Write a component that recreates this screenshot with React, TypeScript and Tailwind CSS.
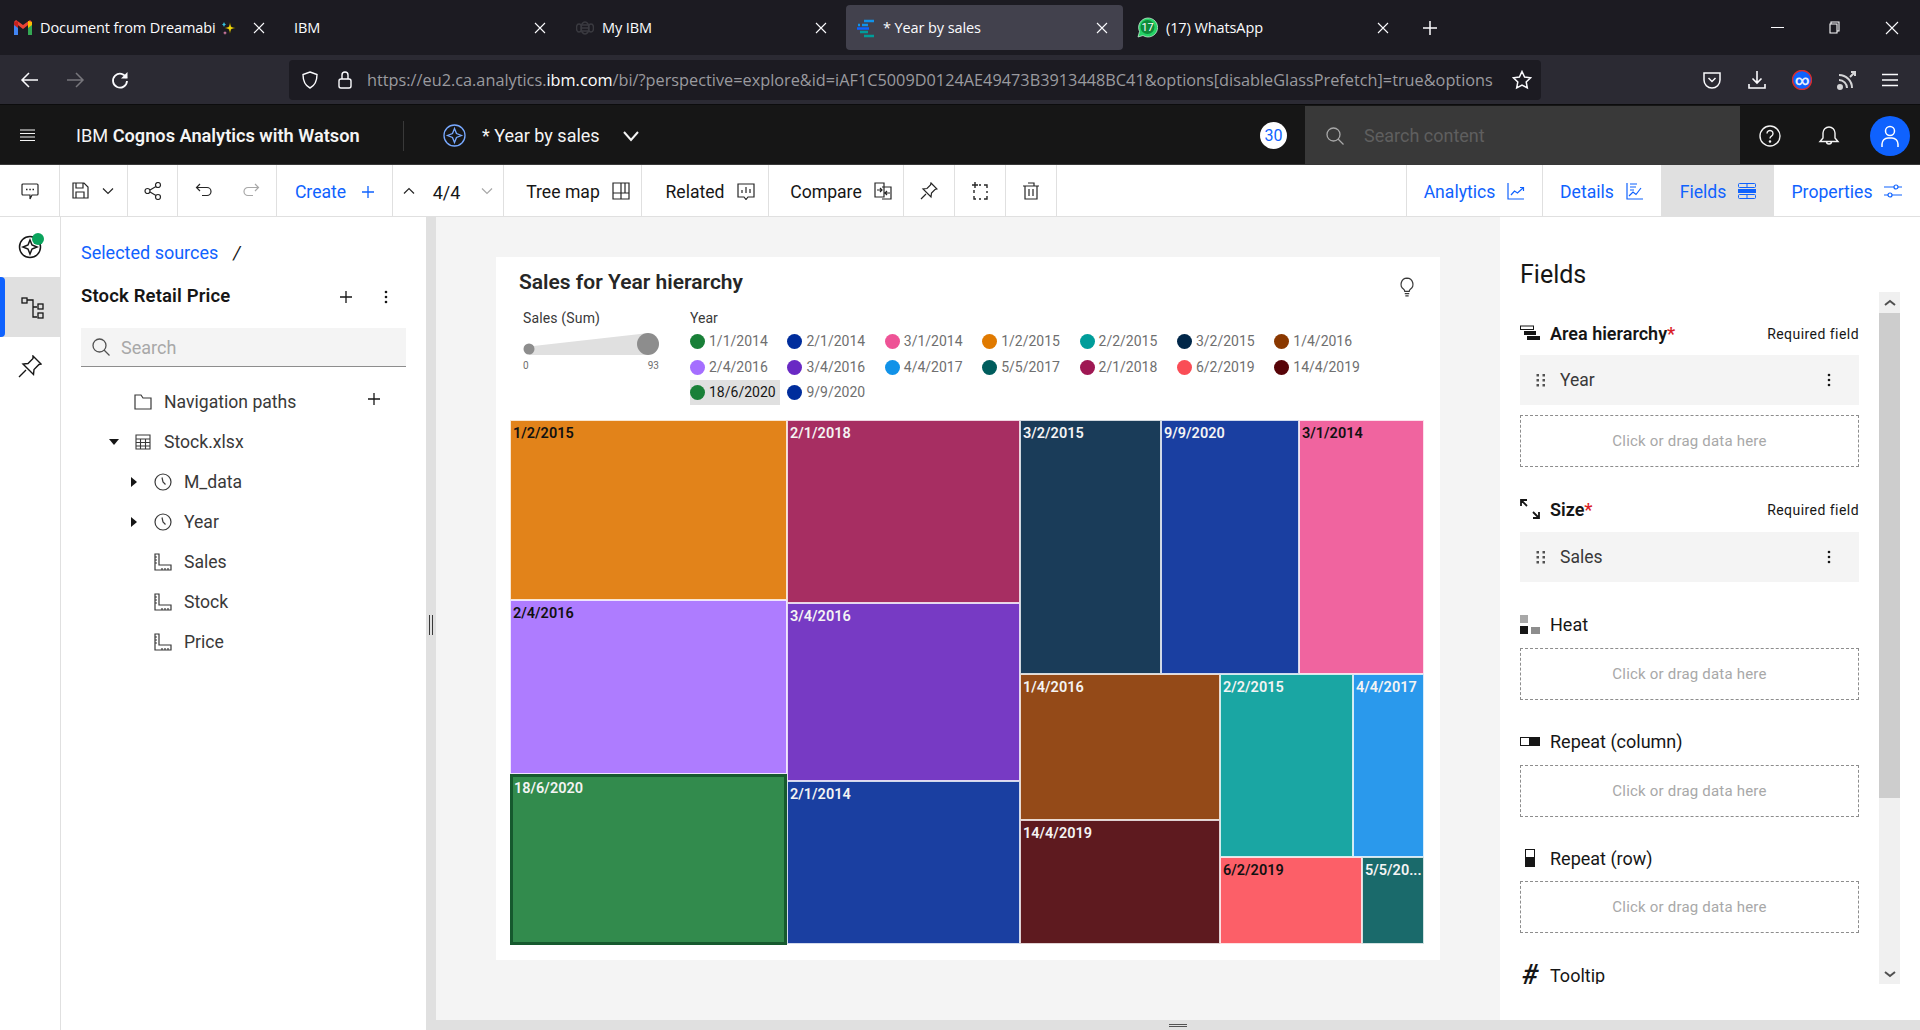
import type { ReactNode } from "react";

const sans = "font-['Roboto',sans-serif]";

function Ico({ s = 20, c = "currentColor", w = 1.4, children, vb = 20 }: { s?: number; c?: string; w?: number; children: ReactNode; vb?: number }) {
  return (
    <svg width={s} height={s} viewBox={`0 0 ${vb} ${vb}`} fill="none" stroke={c} strokeWidth={w} className="shrink-0">
      {children}
    </svg>
  );
}

const Close = ({ c = "#fbfbfe" }: { c?: string }) => (
  <Ico s={12} vb={12} c={c} w={1.1}><path d="M1 1l10 10M11 1L1 11" /></Ico>
);

function Tab({ w, icon, label, active }: { w: string; icon?: ReactNode; label: ReactNode; active?: boolean }) {
  return (
    <div className={`${w} h-[45px] flex items-center pl-[14px] pr-[15px] gap-2 text-[14.5px] text-[#fbfbfe] rounded ${active ? "bg-[#42414d]" : ""}`}>
      {icon}
      <div className="flex-1 min-w-0 whitespace-nowrap overflow-hidden">{label}</div>
      <Close />
    </div>
  );
}

const Gmail = () => (
  <svg width="18" height="15" viewBox="0 0 18 15" className="shrink-0">
    <path d="M0 2v13h4V6z" fill="#4285f4" />
    <path d="M14 6v9h4V2z" fill="#34a853" />
    <path d="M0 2l9 7 9-7-2-2-7 5-7-5-2 2z" fill="#ea4335" />
    <path d="M14 1l4 1v3l-4 3z" fill="#fbbc04" />
    <path d="M0 2l4-1v7L0 5z" fill="#c5221f" />
  </svg>
);

const Sparkle = () => (
  <svg width="16" height="16" viewBox="0 0 16 16" className="inline-block align-[-3px] ml-[5px]">
    <path d="M9 2l1.3 4.7L15 8l-4.700 1.300L9 14l-1.300-4.700L3 8l4.700-1.300z" fill="#f5d90a" stroke="#111" strokeWidth="0.6" />
    <path d="M3 2l.8 1.800L5 4.500l-1.200.7L3 7l-.8-1.800L1 4.500l1.200-.7z" fill="#34c3e0" />
    <path d="M4 11l.5 1.200L6 13l-1.500.6L4 15l-.5-1.400L2 13l1.500-.8z" fill="#f08bb8" />
  </svg>
);

const Bee = () => (
  <svg width="18" height="14" viewBox="0 0 18 14" className="shrink-0 ml-[1px]" fill="none" stroke="#3a3a40" strokeWidth="1.500">
    <ellipse cx="9" cy="7" rx="4" ry="6" />
    <path d="M5 4h8M5 7h8M5 10h8" />
    <ellipse cx="3" cy="7" rx="2.500" ry="4" />
    <ellipse cx="15" cy="7" rx="2.500" ry="4" />
  </svg>
);

const CognosTab = () => (
  <svg width="20" height="20" viewBox="0 0 20 20" className="shrink-0" fill="none" strokeWidth="2.500">
    <path d="M8 3h10" stroke="#1192e8" />
    <path d="M2 7h2M6 7h6" stroke="#1192e8" />
    <path d="M1 10.500h12" stroke="#0f62fe" />
    <path d="M4 14h8" stroke="#009d9a" />
    <path d="M8 18h10" stroke="#009d9a" />
  </svg>
);

const WhatsApp = () => (
  <svg width="21" height="21" viewBox="0 0 21 21" className="shrink-0">
    <path d="M1 20l1.500-5.500A9.500 9.500 0 1 1 6 18.500z" fill="#25d366" stroke="#d7f5e0" strokeWidth="0.700" />
    <circle cx="10.500" cy="10" r="7" fill="#0f8a3a" />
    <text x="10.500" y="14" textAnchor="middle" fontSize="11" fill="#fff" fontFamily="Roboto">17</text>
  </svg>
);

function ToolCell({ w, children, bg }: { w: string; children: ReactNode; bg?: string }) {
  return (
    <div className={`${w} h-full shrink-0 flex items-center justify-center gap-[12px] border-r border-[#e0e0e0] ${bg ?? ""}`}>
      {children}
    </div>
  );
}

const ToolText = ({ blue, children }: { blue?: boolean; children: ReactNode }) => (
  <span className={`pt-[3px] ${blue ? "text-[#0f62fe]" : ""}`}>{children}</span>
);

function Leaf({ c, h, w, label, dark, sel }: { c: string; h?: string; w?: string; label: string; dark?: boolean; sel?: boolean }) {
  return (
    <div
      className={`${h ?? ""} ${w ?? ""} ${c} ${sel ? "border-[3px] border-[#16592e] pl-[1px] pt-[2px]" : "border border-white/80 pl-[2px] pt-[3px]"} ${dark ? "text-[#111]" : "text-[#f4f4f4]"} text-[14.5px] font-semibold leading-[20px] overflow-hidden whitespace-nowrap`}
    >
      {label}
    </div>
  );
}

const legend: [string, string, boolean?][] = [
  ["1/1/2014", "bg-[#198038]"], ["2/1/2014", "bg-[#002d9c]"], ["3/1/2014", "bg-[#ee5396]"], ["1/2/2015", "bg-[#e07a00]"],
  ["2/2/2015", "bg-[#009d9a]"], ["3/2/2015", "bg-[#012749]"], ["1/4/2016", "bg-[#8a3800]"], ["2/4/2016", "bg-[#a56eff]"],
  ["3/4/2016", "bg-[#6929c4]"], ["4/4/2017", "bg-[#1192e8]"], ["5/5/2017", "bg-[#005d5d]"], ["2/1/2018", "bg-[#9f1853]"],
  ["6/2/2019", "bg-[#fa4d56]"], ["14/4/2019", "bg-[#570408]"], ["18/6/2020", "bg-[#198038]", true], ["9/9/2020", "bg-[#002d9c]"],
];

const Clock = () => (
  <Ico s={18} vb={18} c="#393939" w={1.2}><circle cx="9" cy="9" r="8" /><path d="M8 4.500l1 4.500 2.500 2.500" /></Ico>
);
const Ruler = () => (
  <Ico s={18} vb={18} c="#393939" w={1.2}><path d="M1 1h4v11h12v5H1zM1 4h2M1 7h2M1 10h2M8 17v-2M11 17v-2M14 17v-2" /></Ico>
);

function TreeRow({ indent, caret, icon, label, plus }: { indent: string; caret?: "down" | "right"; icon: ReactNode; label: string; plus?: boolean }) {
  return (
    <div className={`h-[40px] flex items-center ${indent} text-[17.6px] text-[#393939]`}>
      <div className="w-[24px] h-[24px] flex items-center justify-start shrink-0">
        {caret === "down" && <div className="w-0 h-0 border-x-[5px] border-x-transparent border-t-[6px] border-t-[#161616]" />}
        {caret === "right" && <div className="w-0 h-0 ml-[2px] border-y-[5px] border-y-transparent border-l-[6px] border-l-[#161616]" />}
      </div>
      <div className="w-[20px] flex justify-center shrink-0 mr-[11px]">{icon}</div>
      <span className="flex-1">{label}</span>
      {plus && <span className="mr-[25px] -mt-[6px]"><Ico s={14} vb={14} c="#161616" w={1.3}><path d="M7 1v12M1 7h12" /></Ico></span>}
    </div>
  );
}

const Grip = () => (
  <svg width="10" height="14" viewBox="0 0 10 14" fill="#525252" className="shrink-0">
    {[1, 6, 11].flatMap((y) => [0.500, 6.500].map((x) => <rect key={`${x}-${y}`} x={x} y={y} width="2.500" height="2.500" />))}
  </svg>
);
const VDots = () => (
  <svg width="4" height="14" viewBox="0 0 4 14" fill="#161616" className="shrink-0">
    <circle cx="2" cy="2" r="1.300" /><circle cx="2" cy="7" r="1.300" /><circle cx="2" cy="12" r="1.300" />
  </svg>
);

const Drop = ({ mt }: { mt: string }) => (
  <div className={`${mt} h-[52px] border border-dashed border-[#8d8d8d] flex items-center justify-center text-[15px] text-[#a8a8a8] tracking-[0.2px]`}>
    Click or drag data here
  </div>
);

const Chip = ({ label }: { label: string }) => (
  <div className="h-[50px] bg-[#f4f4f4] flex items-center pl-[16px] pr-[28px] text-[17.5px] text-[#393939]">
    <Grip />
    <span className="ml-[14px] flex-1">{label}</span>
    <VDots />
  </div>
);

function FieldHead({ icon, label, req, mt }: { icon: ReactNode; label: string; req?: boolean; mt: string }) {
  return (
    <div className={`${mt} h-[30px] flex items-center pb-[2px] text-[18px] text-[#161616]`}>
      <div className="w-[20px] flex justify-center shrink-0 mr-[10px]">{icon}</div>
      <span className={req ? "font-semibold" : ""}>{label}</span>
      {req && <span className="text-[#da1e28] font-semibold">*</span>}
      {req && <span className="ml-auto pt-[2px] text-[14px] tracking-[0.45px]">Required field</span>}
    </div>
  );
}

export default function App() {
  return (
    <div className={`${sans} w-[1920px] h-[1030px] overflow-hidden flex flex-col bg-white`}>
      {/* browser tabs */}
      <div className="h-[55px] bg-[#1c1b22] flex items-start pt-[5px] font-['Open_Sans',sans-serif] tracking-[-0.1px] shrink-0">
        <Tab w="w-[280px]" icon={<Gmail />} label={<>Document from Dreamabi<Sparkle /></>} />
        <Tab w="w-[281px]" label="IBM" />
        <Tab w="w-[281px]" icon={<Bee />} label="My IBM" />
        <div className="w-[281px] pl-[4px]">
          <Tab w="w-[277px] !pl-[10px] !gap-[7px]" active icon={<CognosTab />} label="* Year by sales" />
        </div>
        <Tab w="w-[281px]" icon={<WhatsApp />} label="(17) WhatsApp" />
        <div className="h-[45px] flex items-center ml-[18px]"><Ico s={16} vb={16} c="#fbfbfe" w={1.500}><path d="M8 1v14M1 8h14" /></Ico></div>
        <div className="ml-auto h-[45px] flex items-center gap-[44px] pr-[21px]">
          <Ico s={13} vb={13} c="#fbfbfe" w={1}><path d="M0 6.500h13" /></Ico>
          <Ico s={13} vb={13} c="#fbfbfe" w={1.100}><path d="M3 3V1h8v9H9M2 3h7v9H2z" /></Ico>
          <Ico s={14} vb={14} c="#fbfbfe" w={1.100}><path d="M1 1l12 12M13 1L1 13" /></Ico>
        </div>
      </div>

      {/* nav bar */}
      <div className="h-[50px] bg-[#2b2a33] flex items-center shrink-0 border-b border-[#0c0c0d]">
        <div className="w-[289px] flex items-center pl-[20px] gap-[25px]">
          <Ico c="#fbfbfe" w={1.500}><path d="M18 10H2M9 3l-7 7 7 7" /></Ico>
          <Ico c="#77767c" w={1.500}><path d="M2 10h16M11 3l7 7-7 7" /></Ico>
          <Ico c="#fbfbfe" w={1.800}><path d="M16.500 8A7 7 0 1 0 17 11" /><path d="M17.500 2v6.500H11z" fill="#fbfbfe" stroke="none" /></Ico>
        </div>
        <div className="w-[1252px] h-[40px] bg-[#1c1b22] rounded flex items-center pl-[11px] pr-[9px] font-['Open_Sans',sans-serif]">
          <Ico s={20} c="#fbfbfe" w={1.400}><path d="M10 2l7 2.500c0 7-2 11-7 13.500C5 15.500 3 11.500 3 4.500z" /></Ico>
          <span className="ml-[15px]"><Ico s={20} c="#fbfbfe" w={1.400}><rect x="4" y="9" width="12" height="9" rx="2" /><path d="M7 9V5a3 3 0 0 1 6 0v4" /></Ico></span>
          <div className="ml-[12px] w-[1136px] pt-[2px] text-[16.3px] text-[#9a9a9f] whitespace-nowrap overflow-hidden">
            https://eu2.ca.analytics.<span className="text-white">ibm.com</span>/bi/?perspective=explore&amp;id=iAF1C5009D0124AE49473B3913448BC41&amp;options[disableGlassPrefetch]=true&amp;options
          </div>
          <span className="ml-[9px]"><Ico s={20} c="#fbfbfe" w={1.500}><path d="M10 1.500l2.600 5.500 6 .8-4.400 4.100 1.100 6-5.300-2.900-5.300 2.900 1.100-6L1.400 7.800l6-.8z" /></Ico></span>
        </div>
        <div className="flex-1 flex items-center justify-end pr-[22px] gap-[25px]">
          <Ico c="#fbfbfe" w={1.500}><path d="M2 3h16v7a8 8 0 0 1-16 0z" /><path d="M6.500 8l3.500 3.500L13.500 8" /></Ico>
          <Ico c="#fbfbfe" w={1.600}><path d="M10 1v12M5.500 8.500L10 13l4.500-4.500M2 14v4h16v-4" /></Ico>
          <svg width="20" height="20" viewBox="0 0 20 20" className="shrink-0">
            <circle cx="10" cy="10" r="9.500" fill="#0f62fe" stroke="#d92d2d" strokeWidth="1.500" />
            <text x="10" y="14.500" textAnchor="middle" fontSize="14" fontWeight="700" fill="#e7eefc" fontFamily="Roboto">∞</text>
          </svg>
          <Ico c="#d4d4d6" w={2}><circle cx="3" cy="17" r="2" fill="#d4d4d6" /><path d="M2 10a8 8 0 0 1 8 8M2 5a13 13 0 0 1 13 13M13 7l5-5M14 2h4v4" /></Ico>
          <Ico s={16} vb={16} c="#fbfbfe" w={1.500}><path d="M0 2.500h16M0 8h16M0 13.500h16" /></Ico>
        </div>
      </div>

      {/* cognos header */}
      <div className="h-[60px] bg-[#161616] flex items-center shrink-0 pt-[2px] pr-[10px] text-[#f4f4f4] border-b border-[#393939]">
        <div className="w-[76px] pl-[20px]"><Ico s={15} vb={15} c="#f4f4f4" w={1.200}><path d="M0 2h15M0 5.500h15M0 9h15M0 12.500h15" /></Ico></div>
        <div className="w-[327px] text-[18.2px] whitespace-nowrap">IBM <span className="font-semibold">Cognos Analytics with Watson</span></div>
        <div className="w-px h-[30px] bg-[#393939]" />
        <div className="ml-[39px]"><Ico s={23} vb={23} c="#78a9ff" w={1.300}><circle cx="11.500" cy="11.500" r="10.500" /><path d="M11.500 4.500l2 5 5 2-5 2-2 5-2-5-5-2 5-2z" /></Ico></div>
        <span className="ml-[16px] text-[18px] whitespace-nowrap">* Year by sales</span>
        <span className="ml-[22px]"><Ico s={18} vb={18} c="#f4f4f4" w={2}><path d="M2 5l7 8 7-8" /></Ico></span>
        <div className="ml-auto w-[27px] h-[27px] mr-[18px] rounded-full bg-white text-[#0f62fe] text-[16px] flex items-center justify-center">30</div>
        <div className="w-[435px] h-[59px] bg-[#393939] flex items-center pl-[21px] text-[18px] text-[#5f5f5f]">
          <Ico s={18} vb={18} c="#a8a8a8" w={1.300}><circle cx="7.500" cy="7.500" r="6.500" /><path d="M12 12l5.500 5.500" /></Ico>
          <span className="ml-[20px]">Search content</span>
        </div>
        <div className="ml-[19px]"><Ico s={22} vb={22} c="#f4f4f4" w={1.400}><circle cx="11" cy="11" r="10" /><path d="M8 8.500a3 3 0 1 1 4.500 2.600c-1 .6-1.500 1-1.500 2.400" /><circle cx="11" cy="16.500" r=".6" fill="#f4f4f4" /></Ico></div>
        <div className="ml-[37px]"><Ico s={22} vb={22} c="#f4f4f4" w={1.400}><path d="M11 2a6 6 0 0 1 6 6v5l3 3.500H2L5 13V8a6 6 0 0 1 6-6zM8.500 16.500a2.500 2.500 0 0 0 5 0" /></Ico></div>
        <div className="ml-[30px] w-[40px] h-[40px] rounded-full bg-[#0f62fe] flex items-center justify-center">
          <Ico s={24} vb={24} c="#fff" w={1.500}><circle cx="12" cy="7" r="4.500" /><path d="M4 23v-3a6 6 0 0 1 6-6h4a6 6 0 0 1 6 6v3" /></Ico>
        </div>
      </div>

      {/* toolbar */}
      <div className="h-[52px] flex items-center shrink-0 border-b border-[#e0e0e0] text-[17.6px] text-[#161616]">
        <ToolCell w="w-[60px]"><Ico s={18} vb={18} c="#262626" w={1.200}><path d="M2 2h14a1 1 0 0 1 1 1v9a1 1 0 0 1-1 1h-5l-2 4v-4H2a1 1 0 0 1-1-1V3a1 1 0 0 1 1-1z" /><path d="M5 7.500h1.500M8.300 7.500h1.500M11.500 7.500H13" strokeWidth="1.600" /></Ico></ToolCell>
        <ToolCell w="w-[68px]">
          <Ico s={17} vb={17} c="#262626" w={1.200}><path d="M1 1h11l4 4v11H1zM4 1v5h7V1M4 16v-6h8v6" /></Ico>
          <Ico s={14} vb={14} c="#262626" w={1.200}><path d="M2 4.500l5 5 5-5" /></Ico>
        </ToolCell>
        <ToolCell w="w-[50px]"><Ico s={18} vb={18} c="#262626" w={1.200}><circle cx="3.500" cy="9" r="2.500" /><circle cx="14" cy="3" r="2.500" /><circle cx="14" cy="15" r="2.500" /><path d="M6 8l6-3.500M6 10l6 3.500" /></Ico></ToolCell>
        <ToolCell w="w-[99px]">
          <span className="flex gap-[29px]">
            <Ico s={18} vb={18} c="#262626" w={1.200}><path d="M5 2L1.500 5.500 5 9M1.500 5.500H12a4 4 0 0 1 0 8H7" /></Ico>
            <Ico s={18} vb={18} c="#a8a8a8" w={1.200}><path d="M13 2l3.500 3.500L13 9M16.500 5.500H6a4 4 0 0 0 0 8h5" /></Ico>
          </span>
        </ToolCell>
        <ToolCell w="w-[116px]">
          <ToolText blue>Create</ToolText>
          <span className="ml-[4px] pt-[3px]"><Ico s={12} vb={12} c="#0f62fe" w={1.300}><path d="M6 0v12M0 6h12" /></Ico></span>
        </ToolCell>
        <ToolCell w="w-[111px]">
          <Ico s={14} vb={14} c="#262626" w={1.200}><path d="M2 9.500l5-5 5 5" /></Ico>
          <span className="text-[18px] pt-[3px] ml-[5px] mr-[8px]">4/4</span>
          <Ico s={14} vb={14} c="#a8a8a8" w={1.200}><path d="M2 4.500l5 5 5-5" /></Ico>
        </ToolCell>
        <ToolCell w="w-[138px]" bg="pl-[11px]"><ToolText>Tree map</ToolText><Ico s={18} vb={18} c="#262626" w={1.200}><path d="M1 1h16v16H1zM1 11h16M9 1v16M13 1v10" /></Ico></ToolCell>
        <ToolCell w="w-[127px]" bg="pl-[10px]"><ToolText>Related</ToolText><Ico s={18} vb={18} c="#262626" w={1.200}><path d="M1 2h16v13h-6l-2 2.500L7 15H1zM5 11V8M9 11V5M13 11V7" /></Ico></ToolCell>
        <ToolCell w="w-[135px]" bg="pl-[10px]"><ToolText>Compare</ToolText><Ico s={18} vb={18} c="#262626" w={1.200}><path d="M1 1h9v14H1zM8 5h9v12H8M3 8h5M6 6l2 2-2 2M16 11h-5M13 9l-2 2 2 2" /></Ico></ToolCell>
        <ToolCell w="w-[51px]"><Ico s={18} vb={18} c="#262626" w={1.200}><path d="M11 1l6 6-2 .5-3.500 3.500-.5 4L3 7l4-.5L10.500 3zM6 12l-5 5" /></Ico></ToolCell>
        <ToolCell w="w-[51px]" bg="pl-[2px]"><Ico s={18} vb={18} c="#262626" w={1.400}><path d="M7 3h2M12 3h3v3M15 9v2M15 14v3h-3M9 17H7M4 17H2v-3M2 11V8M3 0v6M0 3h6" /></Ico></ToolCell>
        <ToolCell w="w-[51px]"><Ico s={18} vb={18} c="#262626" w={1.200}><path d="M3 4h12v13H3zM1 4h16M6 1h6v3M7 7v7M11 7v7" /></Ico></ToolCell>
        <div className="w-[350px] shrink-0 h-full border-r border-[#e0e0e0]" />
        <ToolCell w="w-[136px]"><ToolText blue>Analytics</ToolText><Ico s={18} vb={18} c="#0f62fe" w={1.200}><path d="M1 1v16h16M4 13l3.500-4 3 2L16 6M13 5.500h3.500V9" /></Ico></ToolCell>
        <ToolCell w="w-[119px]"><ToolText blue>Details</ToolText><Ico s={18} vb={18} c="#0f62fe" w={1.200}><path d="M1 1v16h16M4 2h7M4 5h6M4 8h4M3 14l4-4 3 2.500L15 6" /></Ico></ToolCell>
        <ToolCell w="w-[112px]" bg="bg-[#e0e0e0] !border-r-0"><ToolText blue>Fields</ToolText>
          <svg width="18" height="16" viewBox="0 0 18 16" className="shrink-0"><rect x=".5" y=".5" width="17" height="4" rx="1" fill="none" stroke="#0f62fe" /><rect y="6" width="18" height="4" fill="#0f62fe" /><rect x=".5" y="11.500" width="17" height="4" rx="1" fill="none" stroke="#0f62fe" /><path d="M9 .5v4M9 11.500v4" stroke="#0f62fe" /></svg>
        </ToolCell>
        <div className="flex-1 h-full flex items-center justify-center gap-[12px]"><ToolText blue>Properties</ToolText><Ico s={18} vb={18} c="#0f62fe" w={1.200}><path d="M0 5h10M14 5h4M0 13h4M8 13h10" /><circle cx="12" cy="5" r="2" /><circle cx="6" cy="13" r="2" /></Ico></div>
      </div>

      {/* body */}
      <div className="flex-1 min-h-0 flex">
        {/* rail */}
        <div className="w-[61px] shrink-0 border-r border-[#e0e0e0] flex flex-col">
          <div className="h-[60px] flex items-center justify-center relative">
            <Ico s={24} vb={24} c="#161616" w={1.500}><circle cx="12" cy="12" r="10.500" /><path d="M12 5l2 5 5 2-5 2-2 5-2-5-5-2 5-2z" /></Ico>
            <div className="absolute w-[12px] h-[12px] rounded-full bg-[#0aa35c] left-[32px] top-[16px]" />
          </div>
          <div className="h-[60px] bg-[#e0e0e0] flex items-center justify-center pl-[5px] relative">
            <div className="absolute left-0 top-0 bottom-0 w-[5px] bg-[#0f62fe] rounded-r-sm" />
            <Ico s={24} vb={24} c="#161616" w={1.300}><rect x="1" y="3" width="5" height="5" /><path d="M6 5h6v17h4M12 12h4" /><rect x="17" y="9" width="5" height="5" /><rect x="17" y="18" width="5" height="5" /></Ico>
          </div>
          <div className="h-[60px] flex items-center justify-center">
            <Ico s={24} vb={24} c="#161616" w={1.400}><path d="M15 1l8 8-2 .5-5 5-.5 5L5 9l5-.5 5-5zM8 15l-7 7" /></Ico>
          </div>
        </div>

        {/* data panel */}
        <div className="w-[365px] shrink-0 pl-[20px] pr-[20px]">
          <div className="h-[36px] mt-[17px] flex items-center text-[18px]">
            <span className="text-[#0f62fe]">Selected sources</span>
            <span className="ml-[15px] text-[#161616] italic">/</span>
          </div>
          <div className="h-[42px] mt-[6px] flex items-center text-[18.5px] font-semibold tracking-[0.15px] text-[#161616]">
            <span className="flex-1">Stock Retail Price</span>
            <span className="mr-[32px]"><Ico s={12} vb={12} c="#161616" w={1.300}><path d="M6 0v12M0 6h12" /></Ico></span>
            <span className="mr-[18px]"><VDots /></span>
          </div>
          <div className="h-[39px] mt-[10px] bg-[#f4f4f4] border-b border-[#8d8d8d] flex items-center pl-[11px] text-[18px] text-[#a8a8a8]">
            <Ico s={18} vb={18} c="#525252" w={1.300}><circle cx="7.500" cy="7.500" r="6.500" /><path d="M12 12l5.500 5.500" /></Ico>
            <span className="ml-[11px]">Search</span>
          </div>
          <div className="mt-[15px]">
            <TreeRow indent="ml-[28px]" icon={<Ico s={18} vb={18} c="#393939" w={1.200}><path d="M1 2h6l2 3h8v11H1z" /></Ico>} label="Navigation paths" plus />
            <TreeRow indent="ml-[28px]" caret="down" icon={<Ico s={16} vb={16} c="#393939" w={1.100}><path d="M1 1h14v14H1zM1 5h14M1 8.500h14M1 12h14M5.500 5v10M10.500 5v10" /></Ico>} label="Stock.xlsx" />
            <TreeRow indent="ml-[48px]" caret="right" icon={<Clock />} label="M_data" />
            <TreeRow indent="ml-[48px]" caret="right" icon={<Clock />} label="Year" />
            <TreeRow indent="ml-[48px]" icon={<Ruler />} label="Sales" />
            <TreeRow indent="ml-[48px]" icon={<Ruler />} label="Stock" />
            <TreeRow indent="ml-[48px]" icon={<Ruler />} label="Price" />
          </div>
        </div>

        {/* splitter */}
        <div className="w-[10px] shrink-0 bg-[#e0e0e0] flex items-center justify-center pt-[2px]">
          <div className="w-[4px] h-[20px] border-x border-[#393939]" />
        </div>

        {/* canvas + fields */}
        <div className="flex-1 min-w-0 flex flex-col">
          <div className="flex-1 min-h-0 flex">
            <div className="w-[1064px] shrink-0 bg-[#f4f4f4] pl-[60px] pt-[40px]">
              <div className="w-[944px] h-[703px] bg-white px-[14px]">
                <div className="h-[52px] flex items-center pl-[9px] pr-[9px] text-[21px] font-semibold text-[#262626]">
                  <span className="flex-1 -mt-[1px]">Sales for Year hierarchy</span>
                  <span className="mt-[8px]"><Ico s={20} vb={18} c="#393939" w={1.100}><path d="M9 1a5.500 5.500 0 0 0-3 10c.6.500 1 1 1 2h4c0-1 .4-1.500 1-2A5.500 5.500 0 0 0 9 1zM7 15h4M7.500 17h3" /></Ico></span>
                </div>
                <div className="h-[110px] flex text-[14px] text-[#393939]">
                  <div className="w-[180px] pl-[13px]">
                    <div className="h-[20px] mt-[-1px] leading-[20px] tracking-[0.15px]">Sales (Sum)</div>
                    <svg width="138" height="26" viewBox="0 0 138 26" className="mt-[2px] -ml-[2px] block">
                      <path d="M8 16.500L128 3v22H8z" fill="#e0e0e0" />
                      <circle cx="8" cy="19" r="5.500" fill="#8d8d8d" />
                      <circle cx="127" cy="14" r="11" fill="#8d8d8d" />
                    </svg>
                    <div className="w-[136px] flex justify-between text-[10px] text-[#6f6f6f] leading-[14px] mt-[3px]"><span>0</span><span>93</span></div>
                  </div>
                  <div className="flex-1">
                    <div className="h-[20px] mt-[-1px] leading-[20px]">Year</div>
                    <div className="grid grid-cols-[repeat(7,97.400px)] auto-rows-[25.500px] mt-[1px] text-[#6f6f6f]">
                      {legend.map(([t, c, sel]) => (
                        <div key={t} className={`flex items-center gap-[4px] h-[25px] ${sel ? "bg-[#e0e0e0] text-[#161616] w-[90px]" : ""}`}>
                          <div className={`w-[15px] h-[15px] rounded-full shrink-0 ${c}`} />
                          <span>{t}</span>
                        </div>
                      ))}
                    </div>
                  </div>
                </div>
                {/* treemap */}
                <div className="w-[914px] h-[525px] flex mt-[1px]">
                  <div className="w-[277px] flex flex-col">
                    <Leaf c="bg-[#e2831a]" h="h-[180px]" label="1/2/2015" dark />
                    <Leaf c="bg-[#ae7cff]" h="h-[174px]" label="2/4/2016" dark />
                    <Leaf c="bg-[#328b4d]" h="h-[171px]" label="18/6/2020" sel />
                  </div>
                  <div className="w-[233px] flex flex-col">
                    <Leaf c="bg-[#a72e62]" h="h-[183px]" label="2/1/2018" />
                    <Leaf c="bg-[#773ac4]" h="h-[178px]" label="3/4/2016" />
                    <Leaf c="bg-[#1a3fa1]" h="h-[163px]" label="2/1/2014" />
                  </div>
                  <div className="w-[404px] flex flex-col">
                    <div className="h-[254px] flex">
                      <Leaf c="bg-[#1a3c59]" w="w-[141px]" label="3/2/2015" />
                      <Leaf c="bg-[#1a3fa1]" w="w-[138px]" label="9/9/2020" />
                      <Leaf c="bg-[#f0649f]" w="w-[125px]" label="3/1/2014" dark />
                    </div>
                    <div className="h-[270px] flex">
                      <div className="w-[200px] flex flex-col">
                        <Leaf c="bg-[#944a18]" h="h-[146px]" label="1/4/2016" />
                        <Leaf c="bg-[#5e1a1f]" h="h-[124px]" label="14/4/2019" />
                      </div>
                      <div className="w-[204px] flex flex-col">
                        <div className="h-[183px] flex">
                          <Leaf c="bg-[#1aa6a3]" w="w-[133px]" label="2/2/2015" />
                          <Leaf c="bg-[#2a99ec]" w="w-[71px]" label="4/4/2017" />
                        </div>
                        <div className="h-[87px] flex">
                          <Leaf c="bg-[#fc5f68]" w="w-[142px]" label="6/2/2019" dark />
                          <Leaf c="bg-[#1a6a6b]" w="w-[62px]" label="5/5/20..." />
                        </div>
                      </div>
                    </div>
                  </div>
                </div>
              </div>
            </div>

            {/* fields panel */}
            <div className="flex-1 min-w-0 bg-white pl-[20px] pr-[20px]">
              <div className="h-[34px] mt-[41px] flex items-center text-[25px] text-[#161616]">Fields</div>
              <div className="h-[692px] flex">
                <div className="w-[339px] h-full overflow-hidden">
                  <FieldHead mt="mt-[27px]" label="Area hierarchy" req icon={<svg width="20" height="16" viewBox="0 0 20 16" className="shrink-0"><rect x=".5" y="1" width="13" height="3.500" fill="none" stroke="#161616" /><rect x="4" y="6" width="12" height="4" fill="#161616" /><rect x="7" y="11" width="13" height="4" fill="#161616" /></svg>} />
                  <div className="mt-[6px]"><Chip label="Year" /></div>
                  <Drop mt="mt-[10px]" />
                  <FieldHead mt="mt-[28px]" label="Size" req icon={<Ico s={20} vb={20} c="#161616" w={1.800}><path d="M1 7V1h6M1 1l6 6M19 13v6h-6M19 19l-6-6" /></Ico>} />
                  <div className="mt-[7px]"><Chip label="Sales" /></div>
                  <FieldHead mt="mt-[28px]" label="Heat" icon={<svg width="20" height="19" viewBox="0 0 20 19" className="shrink-0"><rect width="8" height="8" fill="#a8a8a8" /><rect y="11" width="8" height="8" fill="#161616" /><rect x="11" y="12" width="9" height="7" fill="#8d8d8d" /></svg>} />
                  <Drop mt="mt-[8px]" />
                  <FieldHead mt="mt-[27px]" label="Repeat (column)" icon={<svg width="20" height="9" viewBox="0 0 20 9" className="shrink-0"><rect x=".5" y=".5" width="9" height="8" fill="none" stroke="#161616" /><rect x="10" width="10" height="9" fill="#161616" /></svg>} />
                  <Drop mt="mt-[8px]" />
                  <FieldHead mt="mt-[27px]" label="Repeat (row)" icon={<svg width="10" height="18" viewBox="0 0 10 18" className="shrink-0"><rect x=".5" y=".5" width="9" height="8" fill="none" stroke="#161616" /><rect y="9" width="10" height="9" fill="#161616" /></svg>} />
                  <Drop mt="mt-[7px]" />
                  <FieldHead mt="mt-[28px]" label="Tooltip" icon={<span className="text-[28px] font-semibold leading-none italic">#</span>} />
                </div>
                <div className="ml-[20px] w-[21px] h-full bg-[#f0f0f0] flex flex-col">
                  <div className="h-[21px] flex items-center justify-center"><Ico s={12} vb={12} c="#505050" w={2}><path d="M1 8l5-4 5 4" /></Ico></div>
                  <div className="h-[485px] bg-[#cdcdcd]" />
                  <div className="flex-1" />
                  <div className="h-[21px] flex items-center justify-center"><Ico s={12} vb={12} c="#505050" w={2}><path d="M1 4l5 4 5-4" /></Ico></div>
                </div>
              </div>
            </div>
          </div>
          <div className="h-[10px] shrink-0 bg-[#e0e0e0] flex justify-center items-center">
            <div className="w-[18px] h-[3px] border-y border-[#525252]" />
          </div>
        </div>
      </div>
    </div>
  );
}
